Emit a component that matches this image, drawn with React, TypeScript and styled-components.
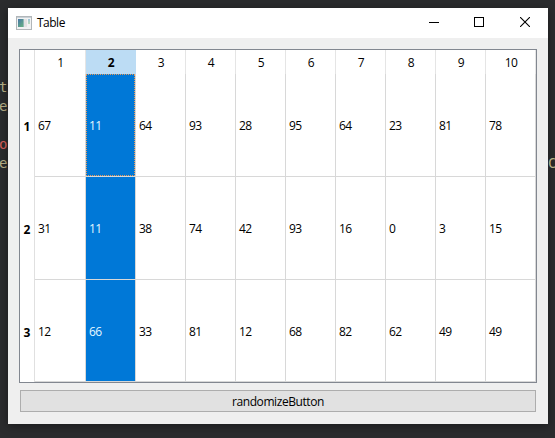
import React from "react";
import styled, { createGlobalStyle } from "styled-components";

const GlobalStyle = createGlobalStyle`
  * { box-sizing: border-box; }
  body { margin: 0; background: #2b2c2e; overflow: hidden; }
`;

const Desktop = styled.div`
  display: grid;
  grid-template-columns: 8px 540px 7px;
  grid-template-rows: 416px;
  width: 555px;
  height: 438px;
  padding-top: 8px;
  background: #2b2c2e;
  font-family: "Open Sans", "Noto Sans", sans-serif;
  font-size: 12px;
  color: #000;
  overflow: hidden;
`;

const Gutter = styled.div<{ $side: "left" | "right" }>`
  display: flex;
  flex-direction: column;
  overflow: hidden;
  padding-top: ${(p) => (p.$side === "left" ? 70 : 146)}px;
  padding-left: ${(p) => (p.$side === "left" ? 0 : 1)}px;
  font-family: "DejaVu Sans Mono", monospace;
  font-size: 14px;
  line-height: 19px;
`;

const CodeLine = styled.span<{ $color?: string }>`
  height: 19px;
  margin-left: -1px;
  color: ${(p) => p.$color ?? "#b9b088"};
`;

const Window = styled.main`
  display: flex;
  flex-direction: column;
  background: #efefef;
  box-shadow: 0 2px 9px rgba(0, 0, 0, 0.4);
`;

const TitleBar = styled.header`
  display: flex;
  align-items: center;
  height: 30px;
  padding-left: 8px;
  background: #fff;
`;

const Title = styled.span`
  flex: 1;
  margin-left: 5px;
  letter-spacing: -0.5px;
  line-height: 30px;
`;

const Control = styled.button<{ $nudge?: boolean }>`
  display: flex;
  align-items: center;
  justify-content: center;
  width: 46px;
  height: 30px;
  padding: 0 0 2px ${(p) => (p.$nudge ? 2 : 0)}px;
  border: 0;
  background: transparent;
`;

const Content = styled.div`
  display: flex;
  flex-direction: column;
  gap: 7px;
  padding: 11px 11px 12px;
`;

const TableFrame = styled.div`
  width: 518px;
  height: 334px;
  border: 1px solid #828790;
  background: #fff;
`;

const Grid = styled.div`
  display: grid;
  grid-template-columns: 15px 51px repeat(9, 50px);
  grid-template-rows: 24px 103px 103px 102px;
`;

const ColumnHeader = styled.div<{ $selected?: boolean }>`
  display: flex;
  align-items: center;
  justify-content: center;
  padding: 1px 0 0 1px;
  border-right: 1px solid ${(p) => (p.$selected ? "#bcdcf4" : "#e5e5e5")};
  background: ${(p) => (p.$selected ? "#bcdcf4" : "#fff")};
  font-weight: ${(p) => (p.$selected ? 700 : 400)};
  letter-spacing: -0.5px;
`;

const RowHeader = styled.div`
  display: flex;
  align-items: center;
  justify-content: center;
  padding-top: 2px;
  border-right: 1px solid #e0e0e0;
  font-weight: 700;
`;

const Cell = styled.div<{ $selected?: boolean; $last?: boolean }>`
  display: flex;
  align-items: center;
  border-right: 1px solid #d8d8d8;
  border-bottom: 1px solid #d8d8d8;
  background: ${(p) => (p.$selected ? "#0078d7" : "#fff")};
  color: ${(p) => (p.$selected ? "#e6f7ff" : "#000")};
  padding: ${(p) => (p.$last ? 1 : 0)}px 0 0 3px;
  letter-spacing: -0.55px;
`;

const FocusArea = styled.div`
  display: flex;
  align-items: center;
  width: 49px;
  height: 102px;
  margin-left: -3px;
  padding-left: 2px;
  border: 1px dotted #e89a58;
`;

const PushButton = styled.button`
  width: 516px;
  height: 22px;
  margin-left: 1px;
  padding: 1px 0 0;
  border: 1px solid #adadad;
  background: #e1e1e1;
  color: #000;
  font: inherit;
  line-height: 19px;
  letter-spacing: -0.42px;
`;

const rows = [
  [67, 11, 64, 93, 28, 95, 64, 23, 81, 78],
  [31, 11, 38, 74, 42, 93, 16, 0, 3, 15],
  [12, 66, 33, 81, 12, 68, 82, 62, 49, 49],
];

const selectedColumn = 1;

function WindowIcon() {
  return (
    <svg width="16" height="14" viewBox="0 0 16 14" shapeRendering="crispEdges">
      <defs>
        <linearGradient id="pane" x1="0" y1="0" x2="0.7" y2="1">
          <stop offset="0" stopColor="#4775a8" />
          <stop offset="1" stopColor="#62ab85" />
        </linearGradient>
        <linearGradient id="side" x1="0" y1="0" x2="0" y2="1">
          <stop offset="0" stopColor="#9fc3dc" />
          <stop offset="1" stopColor="#b9dcb8" />
        </linearGradient>
      </defs>
      <rect x="0.5" y="0.5" width="15" height="13" fill="#f1f2f3" stroke="#b1b6b9" />
      <rect x="1" y="1" width="14" height="1" fill="#c8d0d6" />
      <rect x="2" y="3" width="5" height="8" fill="url(#pane)" />
      <rect x="7" y="3" width="1" height="8" fill="#8fb9b4" />
      <rect x="8" y="3" width="3" height="8" fill="#e2e2e2" />
      <rect x="12" y="3" width="2" height="5" fill="url(#side)" />
    </svg>
  );
}

export default function App() {
  return (
    <>
      <GlobalStyle />
      <Desktop>
        <Gutter $side="left">
          <CodeLine>t</CodeLine>
          <CodeLine>e</CodeLine>
          <CodeLine />
          <CodeLine $color="#d9605a">o</CodeLine>
          <CodeLine>e</CodeLine>
        </Gutter>
        <Window>
          <TitleBar>
            <WindowIcon />
            <Title>Table</Title>
            <Control aria-label="Minimize" $nudge>
              <svg width="10" height="10" shapeRendering="crispEdges">
                <path d="M0 5.5H10" stroke="#000" />
              </svg>
            </Control>
            <Control aria-label="Maximize">
              <svg width="10" height="10" shapeRendering="crispEdges">
                <rect x="0.5" y="0.5" width="9" height="9" fill="none" stroke="#000" />
              </svg>
            </Control>
            <Control aria-label="Close">
              <svg width="10" height="10">
                <path d="M0 0L10 10M10 0L0 10" stroke="#000" strokeWidth="1.1" />
              </svg>
            </Control>
          </TitleBar>
          <Content>
            <TableFrame>
              <Grid>
                <RowHeader />
                {rows[0].map((_, c) => (
                  <ColumnHeader key={c} $selected={c === selectedColumn}>
                    {c + 1}
                  </ColumnHeader>
                ))}
                {rows.map((row, r) => (
                  <React.Fragment key={r}>
                    <RowHeader>{r + 1}</RowHeader>
                    {row.map((value, c) => (
                      <Cell key={c} $selected={c === selectedColumn} $last={r === rows.length - 1}>
                        {r === 0 && c === selectedColumn ? <FocusArea>{value}</FocusArea> : value}
                      </Cell>
                    ))}
                  </React.Fragment>
                ))}
              </Grid>
            </TableFrame>
            <PushButton>randomizeButton</PushButton>
          </Content>
        </Window>
        <Gutter $side="right">
          <CodeLine>C</CodeLine>
        </Gutter>
      </Desktop>
    </>
  );
}
